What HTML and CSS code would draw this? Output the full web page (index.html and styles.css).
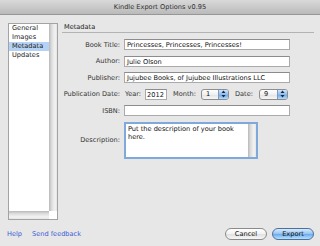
FILE: index.html
```html
<!DOCTYPE html>
<html lang="en">
<head>
  <meta charset="UTF-8">
  <title>Kindle Export Options</title>
  <link rel="stylesheet" href="styles.css">
</head>
<body>

  <div class="window">
    <div class="titlebar">Kindle Export Options v0.95</div>

    <div class="main">
      <div class="sidebar">
        <ul class="nav">
          <li>General</li>
          <li>Images</li>
          <li class="selected">Metadata</li>
          <li>Updates</li>
        </ul>
        <div class="vscroll"></div>
        <div class="hscroll"></div>
        <div class="corner"></div>
      </div>

      <div class="panel">
        <div class="panel-title">Metadata</div>

        <div class="form">
          <label>Book Title:</label>
          <div class="field">Princesses, Princesses, Princesses!</div>

          <label>Author:</label>
          <div class="field">Julie Olson</div>

          <label>Publisher:</label>
          <div class="field">Jujubee Books, of Jujubee Illustrations LLC</div>

          <label>Publication Date:</label>
          <div class="date-row">
            <span>Year:</span>
            <div class="field year">2012</div>
            <span class="gap-left">Month:</span>
            <div class="popup month">
              <span class="popup-value">1</span>
              <span class="popup-arrows">
                <svg width="5" height="8" viewBox="0 0 5 8"><path d="M2.5 0.5 L4.5 3 L0.5 3 Z M0.5 5 L4.5 5 L2.5 7.5 Z" fill="#1a2a44"/></svg>
              </span>
            </div>
            <span class="gap-left">Date:</span>
            <div class="popup date">
              <span class="popup-value">9</span>
              <span class="popup-arrows">
                <svg width="5" height="8" viewBox="0 0 5 8"><path d="M2.5 0.5 L4.5 3 L0.5 3 Z M0.5 5 L4.5 5 L2.5 7.5 Z" fill="#1a2a44"/></svg>
              </span>
            </div>
          </div>

          <label>ISBN:</label>
          <div class="field"></div>

          <label>Description:</label>
          <div class="textarea">
            <div class="textarea-text">Put the description of your book here.</div>
            <div class="textarea-scroll"></div>
          </div>
        </div>
      </div>
    </div>

    <div class="footer">
      <a href="#">Help</a>
      <a href="#">Send feedback</a>
      <div class="buttons">
        <button class="btn">Cancel</button>
        <button class="btn btn-default">Export</button>
      </div>
    </div>
  </div>

</body>
</html>
```

FILE: styles.css
```css
body {
  margin: 0;
  font-family: "DejaVu Sans", sans-serif;
  font-size: 6.6px;
  color: #333;
}

.window {
  width: 320px;
  height: 246px;
  background: #e7e7e7;
  display: flex;
  flex-direction: column;
  overflow: hidden;
}

.titlebar {
  height: 14px;
  line-height: 14px;
  text-align: center;
  color: #303030;
  background: linear-gradient(#d9d9d9, #bababa);
  border-bottom: 1px solid #979797;
}

.main {
  flex: 1;
  display: flex;
  padding: 8px 6px 0 8px;
  min-height: 0;
}

.sidebar {
  width: 50px;
  box-sizing: border-box;
  border: 1px solid #a3a3a3;
  background: #fff;
  display: grid;
  grid-template-columns: 1fr 8px;
  grid-template-rows: 1fr 8px;
}

.nav {
  list-style: none;
  margin: 0;
  padding: 0;
}

.nav li {
  height: 9px;
  line-height: 9px;
  padding-left: 3px;
  color: #222;
}

.nav li.selected {
  background: #b5d1f3;
}

.vscroll {
  background: linear-gradient(to right, #b9b9b9, #dedede 35%, #f3f3f3 75%, #e4e4e4);
}

.hscroll {
  background: linear-gradient(#b9b9b9, #dedede 35%, #f3f3f3 75%, #e4e4e4);
}

.corner {
  background: #fff;
}

.panel {
  flex: 1;
  margin-left: 4px;
}

.panel-title {
  height: 9px;
  line-height: 9px;
  padding-left: 2px;
  color: #222;
  border-bottom: 1px solid #b3b3b3;
}

.form {
  margin-top: 6px;
  display: grid;
  grid-template-columns: 58px 166px;
  column-gap: 4px;
  row-gap: 5.5px;
  align-items: center;
}

.form label {
  text-align: right;
  white-space: nowrap;
}

.field {
  height: 11px;
  line-height: 10px;
  box-sizing: border-box;
  padding: 0 2px;
  background: #fff;
  border: 1px solid #aaa;
  border-top-color: #8c8c8c;
  color: #111;
  white-space: nowrap;
  overflow: hidden;
}

.date-row {
  display: flex;
  align-items: center;
  gap: 4px;
  padding-left: 1px;
}

.date-row .gap-left {
  margin-left: 2px;
}

.field.year {
  width: 22px;
  padding: 0 1px;
}

.popup {
  height: 11px;
  box-sizing: border-box;
  display: flex;
  border: 1px solid #8e8e8e;
  border-radius: 3px;
  overflow: hidden;
  background: linear-gradient(#ffffff, #f0f0f0 50%, #e2e2e2 51%, #f7f7f7);
  color: #111;
}

.popup.month {
  width: 28px;
  margin-left: 1px;
}

.popup.date {
  width: 29px;
  margin-left: 2px;
}

.popup-value {
  flex: 1;
  line-height: 9px;
  padding-left: 4px;
}

.popup-arrows {
  width: 9px;
  display: flex;
  align-items: center;
  justify-content: center;
  border-left: 1px solid #7e9ac0;
  background: linear-gradient(#d3e6fb, #8cbcee 50%, #6ca6e8 51%, #b4dcfb);
}

.textarea {
  width: 134px;
  height: 37px;
  box-sizing: border-box;
  border: 2px solid #7fa8db;
  background: #fff;
  display: flex;
}

.textarea-text {
  flex: 1;
  padding: 1px 2px;
  line-height: 8px;
  color: #111;
}

.textarea-scroll {
  width: 8px;
  background: linear-gradient(to right, #b9b9b9, #dedede 35%, #f3f3f3 75%, #e4e4e4);
}

.footer {
  height: 12px;
  margin: 8px 0 6px;
  padding: 0 6px 0 7px;
  display: flex;
  align-items: center;
  gap: 10px;
}

.footer a {
  color: #3b5bd6;
  text-decoration: none;
}

.buttons {
  margin-left: auto;
  display: flex;
  gap: 5px;
}

.btn {
  width: 42px;
  height: 12px;
  padding: 0;
  font-family: "DejaVu Sans", sans-serif;
  font-size: 6.6px;
  line-height: 10px;
  color: #111;
  border: 1px solid #8b8b8b;
  border-radius: 6px;
  background: linear-gradient(#ffffff, #f1f1f1 50%, #e0e0e0 51%, #f7f7f7);
}

.btn-default {
  border-color: #4d6f9f;
  background: linear-gradient(#d8ebfc, #93c2f1 50%, #6aa8ec 51%, #b8e2fc);
}
```
